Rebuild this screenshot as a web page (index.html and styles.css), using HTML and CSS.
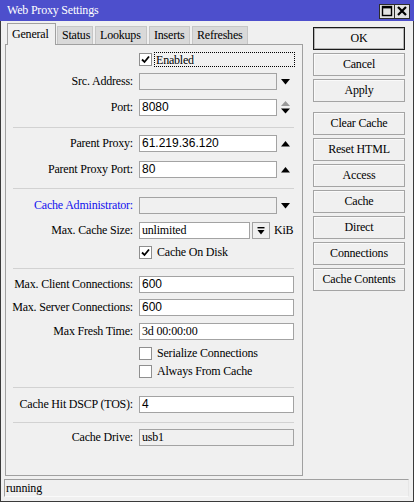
FILE: index.html
```html
<!DOCTYPE html>
<html>
<head>
<meta charset="utf-8">
<link rel="stylesheet" href="styles.css">
</head>
<body>
<div class="window">
  <div class="titlebar">
    <span class="title">Web Proxy Settings</span>
    <div class="tbtns">
      <span class="tbtn"><svg width="12" height="12" viewBox="0 0 12 12"><rect x="1.5" y="1.5" width="9" height="9" fill="none" stroke="#000" stroke-width="1.4"/><rect x="1" y="1" width="10" height="2.4" fill="#000"/></svg></span>
      <span class="tbtn"><svg width="12" height="12" viewBox="0 0 12 12"><path d="M2 2 L10 10 M10 2 L2 10" stroke="#000" stroke-width="2.2"/></svg></span>
    </div>
  </div>
  <div class="main">
    <div class="left">
      <div class="tabs">
        <div class="tab active w-general">General</div>
        <div class="tab w-status">Status</div>
        <div class="tab w-lookups">Lookups</div>
        <div class="tab w-inserts">Inserts</div>
        <div class="tab w-refreshes">Refreshes</div>
      </div>
      <div class="panel">
        <div class="crow mt7">
          <span class="spacer"></span>
          <span class="cb"><svg width="9" height="9" viewBox="0 0 9 9"><path d="M1 4.5 L3.5 7 L8 1.5" fill="none" stroke="#000" stroke-width="1.8"/></svg></span>
          <span class="cblabel focus">Enabled</span>
        </div>
        <div class="row mt6">
          <span class="label">Src. Address:</span>
          <span class="field dis w-drop"></span>
          <span class="arrow"><svg width="9" height="6" viewBox="0 0 9 6"><polygon points="0,0 9,0 4.5,5.5" fill="#000"/></svg></span>
        </div>
        <div class="row mt9">
          <span class="label">Port:</span>
          <span class="field w-drop num">8080</span>
          <span class="spin"><svg width="9" height="13" viewBox="0 0 9 13"><polygon points="0,5 9,5 4.5,0" fill="#9a9a9a"/><polygon points="0,7.5 9,7.5 4.5,12.5" fill="#000"/></svg></span>
        </div>
        <div class="sep mt11"></div>
        <div class="row mt7">
          <span class="label">Parent Proxy:</span>
          <span class="field w-drop num">61.219.36.120</span>
          <span class="arrow"><svg width="9" height="6" viewBox="0 0 9 6"><polygon points="0,5.5 9,5.5 4.5,0" fill="#000"/></svg></span>
        </div>
        <div class="row mt9">
          <span class="label">Parent Proxy Port:</span>
          <span class="field w-drop num">80</span>
          <span class="arrow"><svg width="9" height="6" viewBox="0 0 9 6"><polygon points="0,5.5 9,5.5 4.5,0" fill="#000"/></svg></span>
        </div>
        <div class="sep mt10"></div>
        <div class="row mt8">
          <span class="label blue">Cache Administrator:</span>
          <span class="field dis w-drop"></span>
          <span class="arrow"><svg width="9" height="6" viewBox="0 0 9 6"><polygon points="0,0 9,0 4.5,5.5" fill="#000"/></svg></span>
        </div>
        <div class="row mt8">
          <span class="label">Max. Cache Size:</span>
          <span class="field w-size">unlimited</span>
          <span class="sbtn"><svg width="8" height="8" viewBox="0 0 8 8"><rect x="0.5" y="0" width="7" height="1.4" fill="#000"/><polygon points="0.5,3 7.5,3 4,7.5" fill="#000"/></svg></span>
          <span class="unit">KiB</span>
        </div>
        <div class="crow mt6">
          <span class="spacer"></span>
          <span class="cb"><svg width="9" height="9" viewBox="0 0 9 9"><path d="M1 4.5 L3.5 7 L8 1.5" fill="none" stroke="#000" stroke-width="1.8"/></svg></span>
          <span class="cblabel">Cache On Disk</span>
        </div>
        <div class="sep mt8"></div>
        <div class="row mt7">
          <span class="label">Max. Client Connections:</span>
          <span class="field w-long num">600</span>
        </div>
        <div class="row mt6">
          <span class="label">Max. Server Connections:</span>
          <span class="field w-long num">600</span>
        </div>
        <div class="row mt7">
          <span class="label">Max Fresh Time:</span>
          <span class="field w-long">3d 00:00:00</span>
        </div>
        <div class="crow mt6">
          <span class="spacer"></span>
          <span class="cb"></span>
          <span class="cblabel">Serialize Connections</span>
        </div>
        <div class="crow mt3">
          <span class="spacer"></span>
          <span class="cb"></span>
          <span class="cblabel">Always From Cache</span>
        </div>
        <div class="sep mt8"></div>
        <div class="row mt8">
          <span class="label">Cache Hit DSCP (TOS):</span>
          <span class="field w-long num">4</span>
        </div>
        <div class="sep mt9"></div>
        <div class="row mt6">
          <span class="label">Cache Drive:</span>
          <span class="field dis w-long">usb1</span>
        </div>
      </div>
    </div>
    <div class="side">
      <div class="btn default">OK</div>
      <div class="btn">Cancel</div>
      <div class="btn">Apply</div>
      <div class="btn group">Clear Cache</div>
      <div class="btn">Reset HTML</div>
      <div class="btn">Access</div>
      <div class="btn">Cache</div>
      <div class="btn">Direct</div>
      <div class="btn">Connections</div>
      <div class="btn">Cache Contents</div>
    </div>
  </div>
  <div class="status">running</div>
</div>
</body>
</html>
```

FILE: styles.css
```css
* { box-sizing: border-box; }
html, body { margin: 0; padding: 0; }
body {
  width: 414px;
  height: 502px;
  overflow: hidden;
  font-family: "Liberation Serif", "Times New Roman", serif;
  font-size: 12px;
  letter-spacing: -0.2px;
  color: #000;
  background: #f0f0f0;
}
.window {
  width: 414px;
  height: 502px;
  background: #f0f0f0;
  border-left: 1px solid #3a3a3a;
  border-right: 1px solid #3a3a3a;
  border-bottom: 1px solid #3a3a3a;
  display: flex;
  flex-direction: column;
}
.titlebar {
  height: 21px;
  background: #4d4fcc;
  display: flex;
  align-items: center;
  justify-content: space-between;
  padding: 0 4px 0 6px;
  margin: 0 -1px;
}
.title { color: #fff; font-size: 12px; padding-left: 1px; }
.tbtns { display: flex; margin-top: 1px; }
.tbtn {
  width: 16px;
  height: 15px;
  background: #e2e2e2;
  border: 1px solid #2c2c2c;
  display: flex;
  align-items: center;
  justify-content: center;
}
.tbtn + .tbtn { margin-left: 0; border-left: none; width: 15px; }
.main { display: flex; padding-left: 4px; height: 455px; }
.left { width: 298px; display: flex; flex-direction: column; }
.tabs { height: 23px; display: flex; align-items: flex-end; padding-left: 2px; }
.tab {
  height: 18px;
  background: #d9d9d9;
  border: 1px solid #c6c6c6;
  border-bottom: none;
  padding: 1px 0 0 4px;
  line-height: 15px;
  margin-right: 2px;
}
.tab.active {
  height: 22px;
  background: #f0f0f0;
  border: 1px solid #a0a0a0;
  border-bottom: none;
  margin-bottom: -1px;
  position: relative;
  z-index: 1;
  padding-top: 3px;
  margin-right: 1px;
}
.w-general { width: 49px; }
.w-status { width: 36px; }
.w-lookups { width: 52px; }
.w-inserts { width: 41px; }
.w-refreshes { width: 56px; }
.panel {
  flex: 1;
  border: 1px solid #a0a0a0;
  display: flex;
  flex-direction: column;
}
.row { display: flex; align-items: center; height: 17px; }
.crow { display: flex; align-items: center; height: 15px; }
.label { width: 127px; text-align: right; margin-right: 6px; white-space: nowrap; }
.blue { color: #1010ee; }
.spacer { width: 133px; flex: none; }
.field {
  height: 17px;
  border: 1px solid #a3a3a3;
  background: #fff;
  padding-left: 2px;
  line-height: 15px;
  white-space: nowrap;
  overflow: hidden;
}
.field.dis { background: #f0f0f0; }
.num { font-family: "Liberation Sans", Arial, sans-serif; letter-spacing: 0; }
.w-drop { width: 138px; }
.w-long { width: 155px; }
.w-size { width: 111px; }
.arrow { margin-left: 4px; display: flex; align-items: center; }
.spin { margin-left: 4px; display: flex; align-items: center; }
.sbtn {
  width: 18px;
  height: 17px;
  margin-left: 2px;
  border: 1px solid #a3a3a3;
  background: #f0f0f0;
  display: flex;
  align-items: center;
  justify-content: center;
}
.unit { margin-left: 4px; }
.cb {
  width: 13px;
  height: 13px;
  border: 1px solid #8f8f8f;
  background: #fff;
  display: flex;
  align-items: center;
  justify-content: center;
  flex: none;
}
.cblabel { margin-left: 3px; padding-left: 2px; height: 15px; line-height: 14px; }
.cblabel.focus { width: 141px; border: 1px dotted #000; padding-left: 1px; margin-left: 2px; }
.sep { height: 1px; background: #d2d2d2; margin-left: 7px; width: 281px; }
.mt3 { margin-top: 3px; }
.mt6 { margin-top: 6px; }
.mt7 { margin-top: 7px; }
.mt8 { margin-top: 8px; }
.mt9 { margin-top: 9px; }
.mt10 { margin-top: 10px; }
.mt11 { margin-top: 11px; }
.side { margin-left: 10px; padding-top: 6px; display: flex; flex-direction: column; gap: 3px; }
.btn {
  width: 92px;
  height: 23px;
  border: 1px solid #a4a4a4;
  background: #f0f0f0;
  box-shadow: inset 1px 1px 0 #fafafa;
  text-align: center;
  line-height: 21px;
}
.btn.default { border-color: #1a1a1a; box-shadow: inset 0 0 0 1px #b4b4b4; }
.btn.group { margin-top: 7px; }
.status {
  margin: 3px 0 0 3px;
  width: 405px;
  height: 18px;
  border: 1px solid #a0a0a0;
  border-right-color: #e6e6e6;
  border-bottom-color: #fafafa;
  padding-left: 1px;
  line-height: 16px;
}
```
